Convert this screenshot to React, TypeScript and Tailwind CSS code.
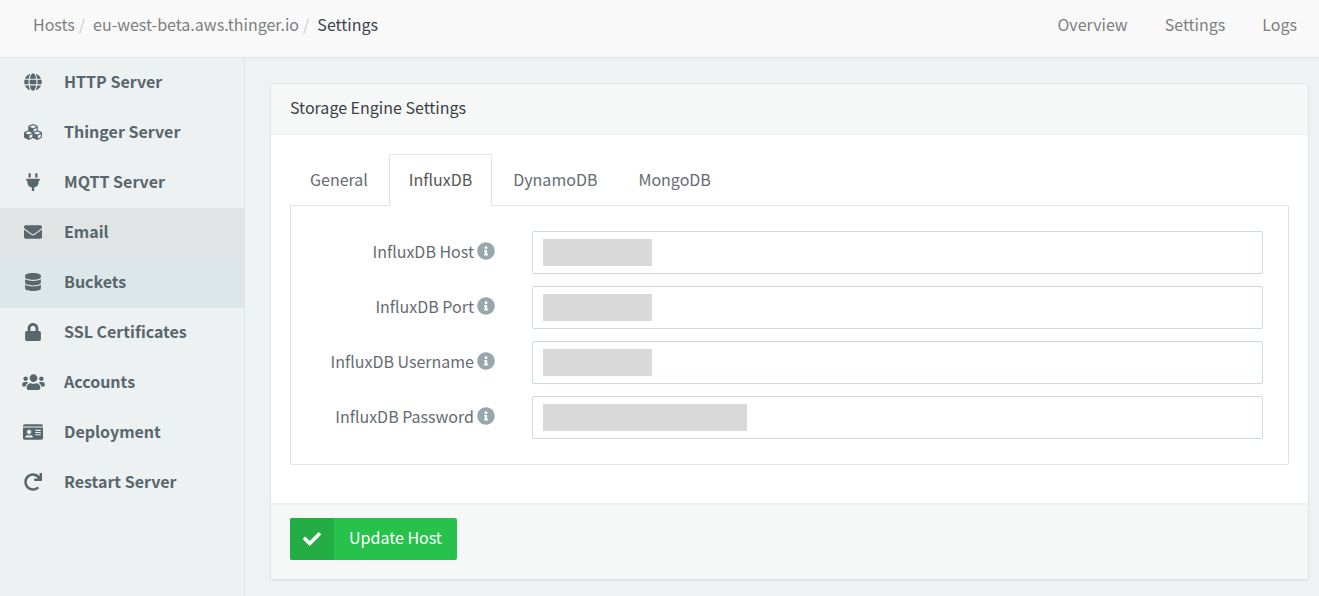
import { useState } from "react";
import type { IconType } from "react-icons";
import {
  FaCheck,
  FaCubes,
  FaDatabase,
  FaEnvelope,
  FaGlobe,
  FaIdCard,
  FaInfoCircle,
  FaLock,
  FaPlug,
  FaRedo,
  FaUsers,
} from "react-icons/fa";

const menu: { label: string; icon: IconType; size: string; row: string }[] = [
  { label: "HTTP Server", icon: FaGlobe, size: "size-[18px]", row: "" },
  { label: "Thinger Server", icon: FaCubes, size: "h-[18px] w-5", row: "" },
  { label: "MQTT Server", icon: FaPlug, size: "size-[18px]", row: "" },
  { label: "Email", icon: FaEnvelope, size: "size-[18px]", row: "bg-[#e1e5e5]" },
  { label: "Buckets", icon: FaDatabase, size: "size-[18px]", row: "bg-[#dde6e9]" },
  { label: "SSL Certificates", icon: FaLock, size: "size-[18px]", row: "" },
  { label: "Accounts", icon: FaUsers, size: "h-[18px] w-[23px]", row: "" },
  { label: "Deployment", icon: FaIdCard, size: "h-[18px] w-5", row: "" },
  { label: "Restart Server", icon: FaRedo, size: "size-[18px]", row: "" },
];

const tabs = ["General", "InfluxDB", "DynamoDB", "MongoDB"];

const fields = [
  { id: "influx-host", label: "InfluxDB Host", type: "text", mask: "w-[109px]" },
  { id: "influx-port", label: "InfluxDB Port", type: "text", mask: "w-[109px]" },
  { id: "influx-user", label: "InfluxDB Username", type: "text", mask: "w-[109px]" },
  { id: "influx-password", label: "InfluxDB Password", type: "password", mask: "w-[204px]" },
];

function Header() {
  return (
    <header className="flex h-[58px] items-center justify-between border-b border-[#dfe6e5] bg-[#f9f9f9] pr-[22px] pb-[9px] pl-[33px] text-[#7e7e7e]">
      <nav aria-label="Breadcrumb">
        <ol className="flex">
          <li>
            <a href="#hosts">Hosts</a>
            <span className="pr-2 pl-1 text-[#ccc]">/</span>
          </li>
          <li>
            <a href="#host">eu-west-beta.aws.thinger.io</a>
            <span className="pr-2 pl-1 text-[#ccc]">/</span>
          </li>
          <li className="text-[#3a3f51]">Settings</li>
        </ol>
      </nav>
      <nav aria-label="Host" className="flex gap-[37px]">
        <a href="#overview">Overview</a>
        <a href="#settings">Settings</a>
        <a href="#logs">Logs</a>
      </nav>
    </header>
  );
}

function Sidebar() {
  return (
    <nav aria-label="Server settings" className="w-[245px] shrink-0 border-r border-[#dde4e6] bg-[#edf1f2]">
      <ul>
        {menu.map(({ label, icon: Icon, size, row }) => (
          <li key={label} className={row}>
            <a href="#section" className="flex h-[50px] items-center pb-[2px] pl-5 font-bold text-[#58666e]">
              <span className="mr-[18px] flex w-[26px] justify-center">
                <Icon className={size} />
              </span>
              <span className="pb-[2px]">{label}</span>
            </a>
          </li>
        ))}
      </ul>
    </nav>
  );
}

export default function App() {
  const [active, setActive] = useState("InfluxDB");

  return (
    <div className="flex min-h-screen flex-col bg-[#eef2f3] font-['Noto_Sans_CJK_SC','Noto_Sans',sans-serif] text-[16px] leading-[24px] text-[#656b73]">
      <Header />
      <div className="flex flex-1">
        <Sidebar />
        <main className="min-w-0 flex-1 pt-[25px] pr-[10px] pb-4 pl-[25px]">
          <section className="rounded-xs border border-[#e0e6e8] bg-white shadow-[0_1px_1px_rgba(0,0,0,0.05)]">
            <h1 className="border-b border-[#ebf0f0] bg-[#f6f8f8] px-[19px] pt-[11px] pb-[15px] text-[#3a3f44]">
              Storage Engine Settings
            </h1>
            <form onSubmit={(e) => e.preventDefault()}>
              <div className="px-[19px] pt-[19px] pb-[38px]">
                <div role="tablist" className="flex gap-px">
                  {tabs.map((tab) => (
                    <button
                      key={tab}
                      type="button"
                      role="tab"
                      aria-selected={tab === active}
                      onClick={() => setActive(tab)}
                      className={
                        tab === active
                          ? "relative -mb-px h-[52px] rounded-t-xs border border-b-0 border-[#dee5e7] bg-white px-[19px] pb-[3px] text-[#555]"
                          : "h-[51px] border border-b-0 border-transparent px-[19px] pb-[2px]"
                      }
                    >
                      {tab}
                    </button>
                  ))}
                </div>
                <div
                  role="tabpanel"
                  className="flex flex-col gap-3 rounded-b-xs border border-[#dee5e7] p-[25px]"
                >
                  {fields.map((field) => (
                    <div key={field.id} className="flex items-center gap-[37px]">
                      <label
                        htmlFor={field.id}
                        className="flex w-[179px] shrink-0 items-center justify-end gap-[3px] pb-1"
                      >
                        {field.label}
                        <FaInfoCircle className="size-[18px] text-[#98a6ad]" />
                      </label>
                      <div className="relative flex-1">
                        <input
                          id={field.id}
                          type={field.type}
                          className="block h-[43px] w-full rounded-xs border border-[#cfdadd] bg-white px-3"
                        />
                        <span className={`absolute top-2 left-[11px] h-[27px] bg-[#d9d9d9] ${field.mask}`} />
                      </div>
                    </div>
                  ))}
                </div>
              </div>
              <div className="border-t-2 border-[#edf1f1] bg-[#f6f8f8] px-[19px] pt-[13px] pb-[19px]">
                <button
                  type="submit"
                  className="flex h-[42px] overflow-hidden rounded-xs bg-[#27c24c] text-white"
                >
                  <span className="flex h-full w-11 items-center justify-center bg-[#23ad44]">
                    <FaCheck className="size-[18px]" />
                  </span>
                  <span className="px-[15px] pt-[7px]">Update Host</span>
                </button>
              </div>
            </form>
          </section>
        </main>
      </div>
    </div>
  );
}
